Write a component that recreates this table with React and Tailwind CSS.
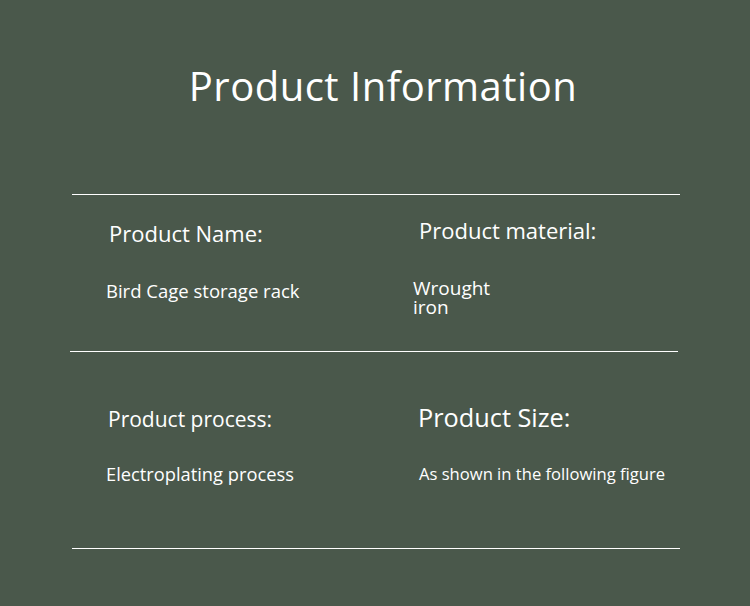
function Field({ label, value, className = "", labelClass = "", valueClass = "" }) {
  return (
    <div className={className}>
      <div className={`text-white ${labelClass}`}>{label}</div>
      <div className={`text-white ${valueClass}`}>{value}</div>
    </div>
  );
}

export default function App() {
  return (
    <div
      className="w-[750px] h-[606px] bg-[#4a584b] overflow-hidden font-['Open_Sans','Noto_Sans',sans-serif]"
    >
      {/* TITLE */}
      <h1 className="pt-[58px] pl-[16px] text-center text-[40px] leading-[56px] text-white tracking-[0.5px]">
        Product Information
      </h1>

      <div className="mt-[80px] ml-[72px] w-[608px] h-px bg-white" />

      {/* ROW 1 */}
      <div className="flex h-[156px]">
        <Field
          className="w-[310px] pl-[109px] pt-[23px]"
          labelClass="text-[22px] leading-[30px]"
          valueClass="mt-[31px] -ml-[3px] text-[18.5px] leading-[24px]"
          label="Product Name:"
          value="Bird Cage storage rack"
        />
        <Field
          className="w-[140px] pl-[109px] pt-[20px]"
          labelClass="text-[22px] leading-[30px] whitespace-nowrap"
          valueClass="mt-[34px] -ml-[6px] text-[19px] leading-[19px] w-[90px]"
          label="Product material:"
          value="Wrought iron"
        />
      </div>

      <div className="ml-[70px] w-[608px] h-px bg-white" />

      {/* ROW 2 */}
      <div className="flex h-[196px]">
        <Field
          className="w-[310px] pl-[108px] pt-[52px]"
          labelClass="text-[21px] leading-[30px]"
          valueClass="mt-[28px] -ml-[2px] text-[18.3px] leading-[24px]"
          label="Product process:"
          value="Electroplating process"
        />
        <Field
          className="pl-[108px] pt-[49px]"
          labelClass="text-[25.3px] leading-[32px]"
          valueClass="mt-[30px] ml-[1px] text-[16.6px] leading-[22px]"
          label="Product Size:"
          value="As shown in the following figure"
        />
      </div>

      <div className="ml-[72px] w-[608px] h-px bg-white" />
    </div>
  );
}
